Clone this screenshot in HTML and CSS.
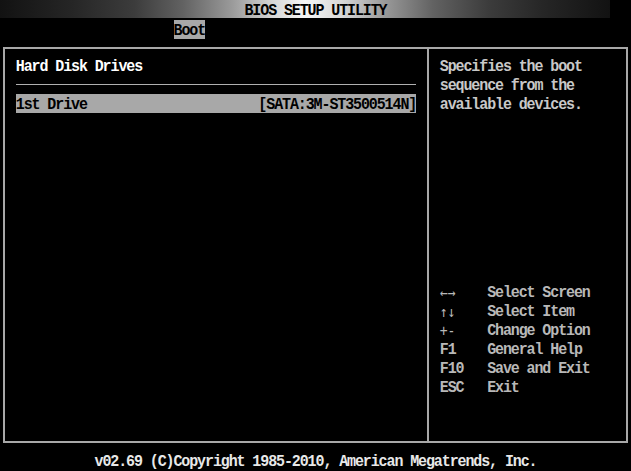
FILE: index.html
```html
<!DOCTYPE html>
<html>
<head>
<meta charset="utf-8">
<title>BIOS SETUP UTILITY</title>
<link rel="stylesheet" href="styles.css">
</head>
<body>
<div class="screen">
  <div class="titlebar"><span class="txt">BIOS SETUP UTILITY</span></div>
  <div class="menubar"><span class="tab active"><span class="txt">Boot</span></span></div>
  <div class="frame">
    <div class="main">
      <div class="row heading"><span class="txt">Hard Disk Drives</span></div>
      <div class="row sep"><div class="rule"></div></div>
      <div class="row item selected"><span class="txt">1st Drive</span><span class="txt">[SATA:3M-ST3500514N]</span></div>
    </div>
    <div class="help">
      <div class="desc">
        <div class="row"><span class="txt">Specifies the boot</span></div>
        <div class="row"><span class="txt">sequence from the</span></div>
        <div class="row"><span class="txt">available devices.</span></div>
      </div>
      <div class="legend">
        <div class="row key"><span class="k"><span class="txt arrows">&larr;&rarr;</span></span><span class="txt">Select Screen</span></div>
        <div class="row key"><span class="k"><span class="txt arrows">&uarr;&darr;</span></span><span class="txt">Select Item</span></div>
        <div class="row key"><span class="k"><span class="txt arrows">+-</span></span><span class="txt">Change Option</span></div>
        <div class="row key"><span class="k"><span class="txt">F1</span></span><span class="txt">General Help</span></div>
        <div class="row key"><span class="k"><span class="txt">F10</span></span><span class="txt">Save and Exit</span></div>
        <div class="row key"><span class="k"><span class="txt">ESC</span></span><span class="txt">Exit</span></div>
      </div>
    </div>
  </div>
  <div class="footer"><span class="txt">v02.69 (C)Copyright 1985-2010, American Megatrends, Inc.</span></div>
</div>
</body>
</html>
```

FILE: styles.css
```css
html, body {
  margin: 0;
  padding: 0;
  background: #000;
}

.screen {
  width: 631px;
  height: 471px;
  overflow: hidden;
  background: #000;
  color: #c8c8c8;
  font-family: "Liberation Mono", "DejaVu Sans Mono", monospace;
  font-weight: bold;
  font-size: 15px;
  letter-spacing: -1.11px;
  line-height: 18.84px;
}

.txt {
  display: inline-block;
  transform: translateY(2.5px) scaleY(1.16);
  white-space: pre;
}

.titlebar {
  height: 18.84px;
  text-align: center;
  color: #000;
  background: linear-gradient(90deg, #121212 0%, #262626 12%, #3c3c3c 22%, #626262 30%, #9a9a9a 38%, #d8d8d8 45%, #f6f6f6 50%, #d8d8d8 56%, #9a9a9a 63%, #626262 71%, #3c3c3c 80%, #262626 89%, #121212 100%) no-repeat;
  background-size: 610px 18px;
}

.menubar {
  height: 18.84px;
  padding-left: 173.5px;
}

.tab {
  display: inline-block;
  height: 18.84px;
  transform: translateY(1px);
}

.tab.active {
  background: #a8a8a8;
  color: #000;
}

.frame {
  margin: 9.3px 3px 0 3px;
  border: 2px solid #a8a8a8;
  display: flex;
  height: 396px;
  box-sizing: border-box;
}

.main {
  width: 424px;
  border-right: 2px solid #a8a8a8;
  padding: 7.5px 10.8px;
  box-sizing: border-box;
  flex: none;
}

.row {
  height: 18.84px;
}

.heading {
  color: #fff;
}

.sep {
  display: flex;
  align-items: center;
}

.rule {
  flex: 1;
  height: 1px;
  background: #b0b0b0;
}

.item {
  display: flex;
  justify-content: space-between;
}

.item.selected {
  background: #a8a8a8;
  color: #000;
}

.help {
  flex: 1;
  padding: 7.5px 10.8px;
}

.desc {
  color: #c8c8c8;
}

.legend {
  margin-top: 169.56px;
  color: #b8b8b8;
}

.key {
  display: flex;
}

.k {
  width: 47.34px;
  flex: none;
}

.arrows {
  font-family: "DejaVu Sans Mono", monospace;
  font-weight: normal;
  font-size: 13px;
  letter-spacing: 0;
}

.footer {
  margin-top: 9.1px;
  height: 18.84px;
  display: flex;
  justify-content: center;
  align-items: center;
  color: #e8e8e8;
}

.footer .txt {
  line-height: 15px;
  transform: translateY(0.5px) scaleY(1.16);
}
```
